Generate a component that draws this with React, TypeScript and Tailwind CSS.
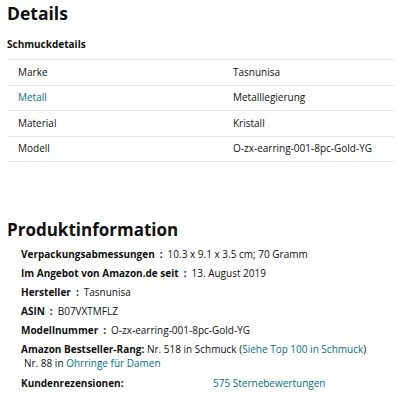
const details = [
  { label: "Marke", value: "Tasnunisa" },
  { label: "Metall", value: "Metalllegierung", link: true },
  { label: "Material", value: "Kristall" },
  { label: "Modell", value: "O-zx-earring-001-8pc-Gold-YG" },
];

const info = [
  { label: "Verpackungsabmessungen", value: "10.3 x 9.1 x 3.5 cm; 70 Gramm" },
  { label: "Im Angebot von Amazon.de seit", value: "13. August 2019" },
  { label: "Hersteller", value: "Tasnunisa" },
  { label: "ASIN", value: "B07VXTMFLZ" },
  { label: "Modellnummer", value: "O-zx-earring-001-8pc-Gold-YG" },
];

export default function App() {
  return (
    <div
      className="w-[401px] h-[403px] bg-white text-[#0f1111] px-[7px] pt-[1px] overflow-hidden"
      style={{ fontFamily: '"Open Sans", "Noto Sans", Arial, sans-serif' }}
    >
      <h2 className="text-[17.5px] leading-[24px] font-bold">Details</h2>
      <h3 className="mt-[12px] text-[10px] leading-[14px] font-bold">Schmuckdetails</h3>

      {/* Schmuck table */}
      <table className="mt-[8px] w-full border-collapse text-[10px] border-t border-[#e7e7e7]">
        <tbody>
          {details.map((d) => (
            <tr key={d.label} className="border-b border-[#e7e7e7] h-[25.5px]">
              <td className={`pl-[11px] w-[226px] ${d.link ? "text-[#007185]" : ""}`}>{d.label}</td>
              <td>{d.value}</td>
            </tr>
          ))}
        </tbody>
      </table>

      <h2 className="mt-[56px] text-[17px] leading-[24px] font-bold">Produktinformation</h2>

      <div className="pl-[14px] text-[10px] leading-[14px]">
        {info.map((r) => (
          <div key={r.label} className="mt-[5px]">
            <span className="font-bold">{r.label}</span>
            <span className="font-bold mx-[5px]">:</span>
            <span>{r.value}</span>
          </div>
        ))}
        <div className="mt-[5px]">
          <span className="font-bold">Amazon Bestseller-Rang:</span> Nr. 518 in Schmuck (
          <span className="text-[#007185]">Siehe Top 100 in Schmuck</span>)
          <div className="pl-[3px]">
            Nr. 88 in <span className="text-[#007185]">Ohrringe für Damen</span>
          </div>
        </div>
        <div className="mt-[6px] flex">
          <span className="font-bold w-[192px]">Kundenrezensionen:</span>
          <span className="text-[#007185]">575 Sternebewertungen</span>
        </div>
      </div>
    </div>
  );
}
